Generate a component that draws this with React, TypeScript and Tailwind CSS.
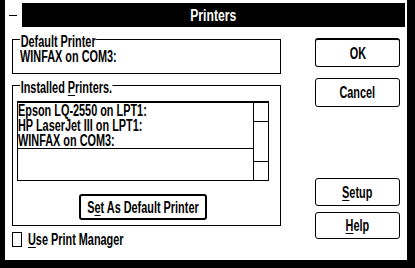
import React from "react";

const FONT = "font-['Liberation_Sans',Arial,sans-serif] font-bold text-[16px] leading-[15px] text-black";

function T({ children, className = "" }: { children: React.ReactNode; className?: string }) {
  return (
    <span className={`inline-block whitespace-nowrap scale-x-[0.68] ${className}`}>{children}</span>
  );
}

function Btn({ children, h, extra = "" }: { children: React.ReactNode; h: string; extra?: string }) {
  return (
    <div className={`w-[85px] ${h} border border-black rounded-[3px] flex items-center justify-center ${extra}`}>
      <T className="origin-center">{children}</T>
    </div>
  );
}

export default function App() {
  return (
    <div className={`w-[415px] h-[268px] bg-black pl-[5px] pr-[8px] pb-[8px] overflow-hidden ${FONT}`}>
      <div className="w-[402px] h-[260px] bg-white flex flex-col pt-[3px]">
        {/* Title bar */}
        <div className="flex h-[24px] mr-[2px] shrink-0">
          <div className="w-[17px] h-full bg-white flex items-center pl-[4px]">
            <div className="w-[8px] h-px bg-black" />
          </div>
          <div className="flex-1 bg-black flex items-center justify-center text-white">
            <T className="origin-center scale-x-[0.76]">Printers</T>
          </div>
        </div>

        {/* Client */}
        <div className="flex flex-1">
          {/* Left column */}
          <div className="w-[276px] pl-[7px] pt-[12px] flex flex-col">
            {/* Default printer group */}
            <div className="relative w-[269px] h-[35px] border border-black pl-[7px] pt-[9px] flex items-start">
              <T className="absolute left-[7px] -top-[5px] leading-[13px] bg-white px-[1px] origin-left">Default Printer</T>
              <T className="origin-left">WINFAX on COM3:</T>
            </div>

            {/* Installed printers group */}
            <div className="relative mt-[11px] w-[269px] h-[141px] border border-black flex flex-col">
              <T className="absolute left-[7px] -top-[5px] leading-[13px] bg-white px-[1px] origin-left">
                Installed <u className="underline-offset-2">P</u>rinters.
              </T>
              <div className="ml-[4px] mt-[15px] w-[252px] h-[80px] border border-black border-t-2 flex">
                <div className="flex-1 flex flex-col">
                  <div className="h-[15px] flex items-start">
                    <T className="origin-left">Epson LQ-2550 on LPT1:</T>
                  </div>
                  <div className="h-[15px] flex items-start">
                    <T className="origin-left">HP LaserJet III on LPT1:</T>
                  </div>
                  <div className="h-[16px] border-b border-black flex items-start">
                    <T className="origin-left">WINFAX on COM3:</T>
                  </div>
                </div>
                <div className="w-[15px] border-l border-black flex flex-col justify-between">
                  <div className="h-[19px] border-b border-black" />
                  <div className="h-[19px] border-t border-black" />
                </div>
              </div>
              <div className="ml-[66px] mt-[13px] w-[128px] h-[26px] border-2 border-black rounded-[3px] flex items-center justify-center">
                <T className="origin-center">
                  S<u className="underline-offset-2">e</u>t As Default Printer
                </T>
              </div>
            </div>

            {/* Checkbox */}
            <div className="mt-[5px] flex items-start">
              <div className="w-[10px] h-[15px] border border-black mt-[1px]" />
              <div className="ml-[6px] mt-[1px] flex">
                <T className="origin-left">
                  <u className="underline-offset-2">U</u>se Print Manager
                </T>
              </div>
            </div>
          </div>

          {/* Right column */}
          <div className="ml-[34px] pt-[11px] flex flex-col">
            <Btn h="h-[29px]" extra="border-t-2">OK</Btn>
            <div className="mt-[11px]">
              <Btn h="h-[29px]">Cancel</Btn>
            </div>
            <div className="mt-[71px]">
              <Btn h="h-[28px]">
                <u className="underline-offset-2">S</u>etup
              </Btn>
            </div>
            <div className="mt-[6px]">
              <Btn h="h-[27px]">
                <u className="underline-offset-2">H</u>elp
              </Btn>
            </div>
          </div>
        </div>
      </div>
    </div>
  );
}
